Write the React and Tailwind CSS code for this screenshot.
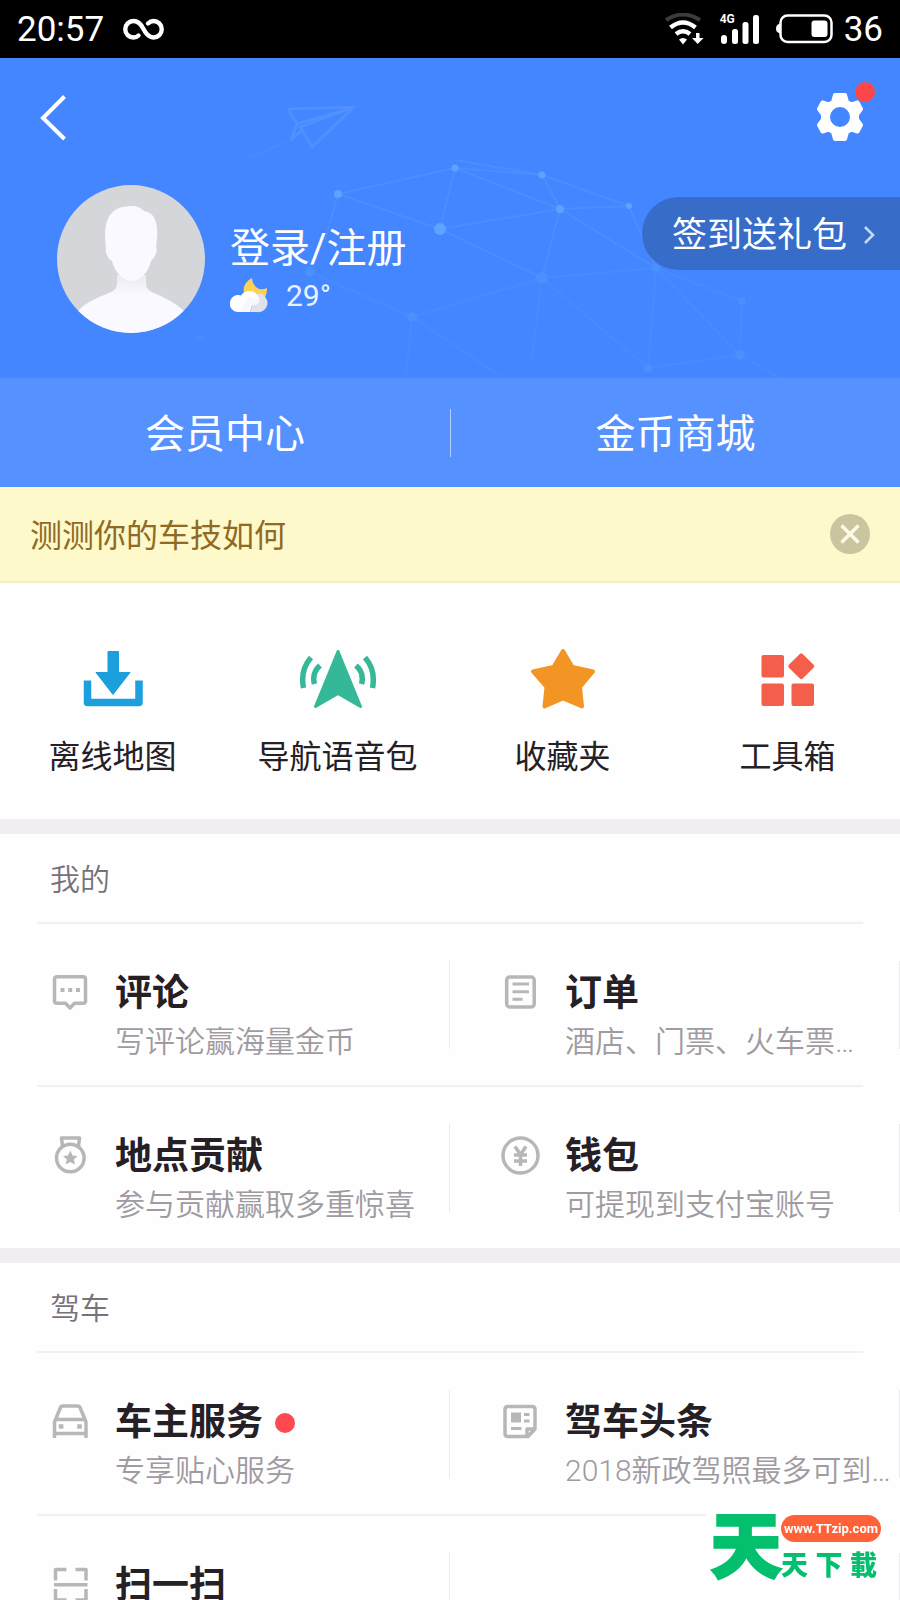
import { useState } from 'react';

const StatusBar = () => (
  <div className="flex items-center justify-between h-[58px] px-[17px] bg-black text-white text-[35px] leading-none">
    <div className="flex items-center gap-4">
      <span>20:57</span>
      <svg className="w-[46px] h-7" viewBox="0 0 46 28" fill="none" stroke="#fff" strokeWidth="4.4" strokeLinecap="round">
        <path d="M18.5 20.5C17 22 15 22.5 13.5 22.5A8.2 8.2 0 0 1 13.5 6C19 6 21.5 10 23.5 14C25.5 18 28.5 22.5 33.5 22.5A8.2 8.2 0 0 0 33.5 6C31.5 6 29.5 7 28 8.5" />
      </svg>
    </div>
    <div className="flex items-center gap-3">
      <svg className="w-10 h-8" viewBox="0 0 40 32" fill="none" stroke="#fff" strokeWidth="4.5">
        <path d="M2 7Q19 -4 36 7" stroke="#3c3c3c" strokeWidth="4" />
        <path d="M6.5 14.5Q19 4.5 31.5 14.5" />
        <path d="M12 21Q19 15.5 26 21" />
        <path d="M15 26.5Q19 23.5 23 26.5L19 31.5Z" fill="#fff" stroke="none" />
        <path d="M32 20h3.500v5h4l-5.800 6l-5.700 -6h4z" fill="#fff" stroke="none" />
      </svg>
      <div className="relative ml-1">
        <span className="absolute left-0 top-0 text-xs leading-none font-bold">4G</span>
        <svg className="w-11 h-8" viewBox="0 0 44 32" fill="#fff">
          <rect x="1" y="22" width="6" height="9" rx="3" />
          <rect x="12" y="16" width="6" height="15" rx="2.5" />
          <rect x="22.5" y="9" width="6" height="22" rx="2.5" />
          <rect x="33" y="2" width="6" height="29" rx="2.5" />
        </svg>
      </div>
      <div className="flex items-center gap-2">
        <svg className="w-[60px] h-8" viewBox="0 0 60 32" fill="none">
          <path d="M5 10.5Q0 11 0 15.500T5 20.500Z" fill="#fff" />
          <rect x="4.5" y="2.5" width="51" height="26.500" rx="7" stroke="#fff" strokeWidth="2.5" />
          <rect x="35.5" y="7.500" width="16" height="16.5" rx="3" fill="#fff" />
        </svg>
        <span>36</span>
      </div>
    </div>
  </div>
);

const Constellation = () => (
  <svg className="absolute left-0 top-0 w-[900px] h-80 pointer-events-none" viewBox="0 58 900 320" fill="none" aria-hidden="true">
    <g stroke="#5a98ff" strokeWidth="2.5" opacity=".6">
      <path d="M288 109L354 107L312 147L300 127L354 107M288 109L297 124L354 107M297 124L291 140L301 131" />
    </g>
    <g stroke="#5797ff" strokeWidth="2" opacity=".45">
      <path d="M338 194L455 168L542 175L560 209L455 168L440 229L338 194L325 240M455 160L542 175L629 206M440 229L560 209L629 206L656 268L560 209L542 278L440 229" />
    </g>
    <g stroke="#5797ff" strokeWidth="2" opacity=".25">
      <path d="M542 278L656 268L742 301L740 355L656 268L648 368L542 278L412 317L310 272M542 278L532 360M412 317L406 376M648 368L740 355L780 378" />
      <path d="M250 157L288 142M412 317L500 376" />
    </g>
    <g fill="#5fa2ff">
      <circle cx="455" cy="168" r="3.5" />
      <circle cx="542" cy="175" r="3.5" />
      <circle cx="560" cy="209" r="4" />
      <circle cx="629" cy="206" r="3" />
      <circle cx="338" cy="194" r="4" />
      <circle cx="440" cy="229" r="6" />
    </g>
    <g fill="#4a90ff">
      <circle cx="542" cy="278" r="6" />
      <circle cx="656" cy="268" r="4" />
      <circle cx="742" cy="301" r="3.5" />
      <circle cx="740" cy="355" r="5" />
      <circle cx="648" cy="368" r="4" />
      <circle cx="412" cy="317" r="5" />
      <circle cx="310" cy="272" r="5" />
      <circle cx="200" cy="338" r="4" opacity=".6" />
    </g>
  </svg>
);

const Avatar = () => (
  <svg className="w-[148px] h-[148px] shrink-0" viewBox="0 0 148 148">
    <defs>
      <clipPath id="avatar-clip">
        <circle cx="74" cy="74" r="74" />
      </clipPath>
      <linearGradient id="neck" x1="0" y1="0" x2="0" y2="1">
        <stop offset="0" stopColor="#eaebee" />
        <stop offset="0.35" stopColor="#f9f9ff" />
      </linearGradient>
    </defs>
    <g clipPath="url(#avatar-clip)">
      <rect width="148" height="148" fill="#d4d6da" />
      <path d="M60 90V99Q60 105 52 108Q30 116 22 125L12 148H136L126 125Q116 116 97 108Q89 105 89 99V90Z" fill="url(#neck)" />
      <path d="M49 64C46 38 50 21 75 21Q82 21 87 26C100 28 102 42 99 62Q101 64 98 71Q96 74 94 76C91 88 83 96 75 96C66 96 58 88 55 76Q52 75 50 70Q48 65 49 64Z" fill="#f9f9ff" />
    </g>
  </svg>
);

const Header = () => (
  <header className="relative bg-[#4486ff] text-white">
    <Constellation />
    <div className="relative flex items-center justify-between h-[118px] pl-9 pr-[33px]">
      <button type="button" aria-label="返回">
        <svg className="w-9 h-12" viewBox="0 0 36 48" fill="none" stroke="#fff" strokeWidth="4">
          <path d="M28.5 3.5L7 25L28.5 46" />
        </svg>
      </button>
      <button type="button" aria-label="设置" className="relative">
        <svg className="w-[54px] h-[54px]" viewBox="-27 -27 54 54">
          <path
            fill="#fff"
            stroke="#fff"
            strokeWidth="4"
            strokeLinejoin="round"
            fillRule="evenodd"
            d="M-5 -22H5L7 -15L11.5 -12.5L17.5 -14.5L21 -8L17 -2.5V2.5L21 8L17.5 14.5L11.5 12.5L7 15L5 22H-5L-7 15L-11.5 12.5L-17.5 14.5L-21 8L-17 2.5V-2.5L-21 -8L-17.5 -14.5L-11.5 -12.5L-7 -15ZM0 -12A12 12 0 1 0 0 12A12 12 0 1 0 0 -12Z"
          />
        </svg>
        <span className="absolute -top-2 -right-2 w-5 h-5 rounded-full bg-[#fc464a]" />
      </button>
    </div>

    <div className="relative flex items-start h-[202px] pt-[9px] pl-[57px]">
      <Avatar />
      <div className="ml-[25px] pt-[34px]">
        <a href="#login" className="block text-[40px] leading-[60px]">登录/注册</a>
        <div className="flex items-center h-8 gap-[18px]">
          <svg className="w-[38px] h-9" viewBox="0 0 38 36">
            <path d="M22 1Q12 6 14 17L22 24L34 22Q37 18 37 11Q30 14 26 10Q22 6 22 1Z" fill="#fcd154" />
            <path d="M20 35H27A9 9 0 0 0 35 20Q32 14 26 18Z" fill="#dfe2ea" />
            <path d="M9 35A8.5 8.5 0 1 1 11 18.5Q14 14 19 14Q27 14 29 22Q23 22 20 35Z" fill="#fff" />
            <path d="M9 35H20Q17 30 24 28Q29 28 30 23L18 20Z" fill="#f6f7fb" />
          </svg>
          <span className="pt-0.5 text-[30px] leading-none text-[#e9f2ff]">29°</span>
        </div>
      </div>
      <button type="button" className="flex items-center gap-[14px] h-[73px] mt-3 ml-auto pt-1 pl-[30px] pr-[23px] rounded-l-full bg-[#376cc9] text-[35px] leading-none">
        签到送礼包
        <svg className="w-4 h-6" viewBox="0 0 16 24" fill="none" stroke="#c8daf8" strokeWidth="2.5">
          <path d="M4 3L12 11L4 19" />
        </svg>
      </button>
    </div>

    <div className="relative grid grid-cols-2 items-center h-[109px] bg-[#5692ff] text-[40px] leading-none">
      <button type="button" className="h-12 pt-1">会员中心</button>
      <button type="button" className="h-12 pt-1 border-l border-[#b4cfff]">金币商城</button>
    </div>
  </header>
);

const Banner = ({ onClose }) => (
  <div className="flex items-center justify-between h-24 px-[30px] bg-[#fdf9cb] border-b-2 border-[#f4eec6]">
    <a href="#quiz" className="pt-1 text-[32px] leading-[48px] text-[#8f6a24]">测测你的车技如何</a>
    <button type="button" aria-label="关闭" onClick={onClose}>
      <svg className="w-10 h-10" viewBox="0 0 40 40">
        <circle cx="20" cy="20" r="20" fill="#c9c69f" />
        <path d="M11.5 11.5L28.5 28.5M28.5 11.5L11.5 28.5" stroke="#fdf9e6" strokeWidth="3.5" />
      </svg>
    </button>
  </div>
);

const shortcuts = [
  {
    label: '离线地图',
    icon: (
      <g fill="#1b9fdd" stroke="#1b9fdd" strokeLinejoin="round">
        <path d="M35 4.5H45.5V25.5H57L40 47.5L23 25.5H35Z" />
        <path d="M14.5 33.5V55.5H66V33.5" fill="none" strokeWidth="7.5" />
      </g>
    ),
  },
  {
    label: '导航语音包',
    icon: (
      <g stroke="#35b898" strokeLinejoin="round">
        <path d="M40 4.5L62.5 59.5L40 46.5L17.5 59.5Z" fill="#35b898" strokeWidth="3" />
        <path d="M13 10.5Q2 23 5.5 41M22 18.5Q13.5 26 16.5 37M67 10.5Q78 23 74.5 41M58 18.5Q66.5 26 63.5 37" fill="none" strokeWidth="5.5" />
      </g>
    ),
  },
  {
    label: '收藏夹',
    icon: (
      <path
        d="M40 4L49.5 20L70 24.5L57 40L59 59.5L40 51.5L21.5 59.5L23.5 40L10 24.5L30.5 20Z"
        fill="#f39524"
        stroke="#f39524"
        strokeWidth="4"
        strokeLinejoin="round"
      />
    ),
  },
  {
    label: '工具箱',
    icon: (
      <g fill="#f45f4b">
        <rect x="13.5" y="8" width="22.5" height="22.5" rx="2" />
        <rect x="13.5" y="36.5" width="22.5" height="22.5" rx="2" />
        <rect x="43.5" y="36.5" width="22.5" height="22.5" rx="2" />
        <rect x="43.5" y="9.5" width="19.5" height="19.5" rx="2" transform="rotate(45 53.25 19.25)" />
      </g>
    ),
  },
];

const Shortcuts = () => (
  <nav className="grid grid-cols-4 pt-16 pb-[37px]">
    {shortcuts.map(({ label, icon }) => (
      <button key={label} type="button" className="flex flex-col items-center gap-[22px] text-[32px] leading-[49px] text-[#252025]">
        <svg className="w-20 h-16" viewBox="0 0 80 64">{icon}</svg>
        {label}
      </button>
    ))}
  </nav>
);

const mine = [
  [
    {
      title: '评论',
      desc: '写评论赢海量金币',
      icon: (
        <>
          <path d="M7 4.7H33Q35.5 4.7 35.5 7V29Q35.5 31.3 33 31.3H24.5L20 36L15.5 31.3H7Q4.5 31.3 4.5 29V7Q4.5 4.7 7 4.7Z" />
          <path d="M10.5 18H14.5M18.2 18H22.2M26 18H30" strokeWidth="4" />
        </>
      ),
    },
    {
      title: '订单',
      desc: '酒店、门票、火车票…',
      icon: (
        <>
          <rect x="6.7" y="5" width="27.5" height="30" rx="3" />
          <path d="M12.5 12H29M12.5 19.7H29M12.5 27.3H22.5" strokeWidth="3" />
        </>
      ),
    },
  ],
  [
    {
      title: '地点贡献',
      desc: '参与贡献赢取多重惊喜',
      icon: (
        <>
          <circle cx="20.3" cy="23" r="13.8" />
          <path d="M12.5 11L11.5 3H29.5L28.5 11" />
          <path d="M20.3 15.5L22.5 20.5L27.5 21L23.8 24.5L25 29.5L20.3 27L15.6 29.5L16.8 24.5L13 21L18 20.5Z" fill="#b9b6ba" stroke="none" />
        </>
      ),
    },
    {
      title: '钱包',
      desc: '可提现到支付宝账号',
      icon: (
        <>
          <circle cx="20.5" cy="20.5" r="17.5" />
          <path d="M15 11.5L20.5 19.5L26 11.5M20.5 19V31M14 20H27M14 26H27" />
        </>
      ),
    },
  ],
];

const driving = [
  [
    {
      title: '车主服务',
      desc: '专享贴心服务',
      isNew: true,
      icon: (
        <>
          <path d="M4.5 37V21L10.5 6.5Q11 5 13 5H27.5Q29.5 5 30 6.5L36 21V37M7 18.5H33.5M4.5 32.5H36" />
          <path d="M8.8 25.5H13.4M27.2 25.5H31.8" strokeWidth="4.5" />
        </>
      ),
    },
    {
      title: '驾车头条',
      desc: '2018新政驾照最多可到…',
      icon: (
        <>
          <path d="M8 5.5H32Q35 5.5 35 8.5V28L28 35.5H8Q5 35.5 5 32.5V8.5Q5 5.5 8 5.5ZM27 35V28H35" />
          <rect x="11" y="11.5" width="10" height="10" fill="#b9b6ba" stroke="none" />
          <path d="M24 13.5H29.5M24 20H29.5M11 27.5H21.5" strokeWidth="3" />
        </>
      ),
    },
  ],
  [
    {
      title: '扫一扫',
      desc: '',
      icon: <path d="M5.5 16.5V5.5H16.5M25.5 5.5H36V16.5M4 20.7H37.5M5.5 25V36H16.5M25.5 36H36V25" />,
    },
    null,
  ],
];

const Entry = ({ item }) => (
  <div className="flex items-center h-full min-w-0">
    {item && (
      <button type="button" className="flex items-start self-start w-full min-w-0 pt-[46px] pl-[50px] text-left">
        <svg className="w-10 h-10 mt-0.5 mr-[25px] shrink-0" viewBox="0 0 40 40" fill="none" stroke="#b9b6ba" strokeWidth="3.5" strokeLinejoin="round">
          {item.icon}
        </svg>
        <span className="flex-1 min-w-0 whitespace-nowrap">
          <span className="flex items-center gap-3 text-[37px] leading-[48px] font-bold text-[#252025]">
            {item.title}
            {item.isNew && <span className="w-5 h-5 rounded-full bg-[#fd4a4f]" />}
          </span>
          <span className="block text-[30px] leading-[48px] font-[350] text-[#a09aa1]">{item.desc}</span>
        </span>
      </button>
    )}
    <span className="w-px h-[88px] ml-auto shrink-0 bg-[#ebeaec]" />
  </div>
);

const Section = ({ title, rows }) => (
  <section className="border-t-[15px] border-[#f2edf3]">
    <h2 className="pl-[50px] h-[88px] text-[30px] leading-[92px] font-[350] text-[#77727a]">{title}</h2>
    {rows.map((row, i) => (
      <div key={i}>
        <div className="mx-[37px] h-0.5 bg-[#f1f0f2]" />
        <div className="grid grid-cols-2 h-[161px]">
          {row.map((item, j) => (
            <Entry key={j} item={item} />
          ))}
        </div>
      </div>
    ))}
  </section>
);

const Watermark = () => (
  <div className="fixed bottom-4 right-[19px] flex items-center pl-1 gap-px bg-[#fefefe] text-[#04bf6d] font-black">
    <span className="w-[70px] text-[72px] leading-[72px] [-webkit-text-stroke:2px_#04bf6d]">天</span>
    <div className="flex flex-col">
      <a href="#ttzip" className="h-[27px] w-[100px] rounded-full bg-[#ff6139] text-center text-[13px] leading-[28px] font-bold text-white">
        www.TTzip.com
      </a>
      <div className="flex justify-between w-24 mt-2 text-[27px] leading-8">
        <span>天</span>
        <span>下</span>
        <span>載</span>
      </div>
    </div>
  </div>
);

const App = () => {
  const [showBanner, setShowBanner] = useState(true);

  return (
    <div lang="zh-CN" className="h-screen overflow-hidden bg-[#fefefe] font-['Roboto','Noto_Sans_CJK_SC',sans-serif]">
      <StatusBar />
      <Header />
      {showBanner && <Banner onClose={() => setShowBanner(false)} />}
      <Shortcuts />
      <Section title="我的" rows={mine} />
      <Section title="驾车" rows={driving} />
      <Watermark />
    </div>
  );
};

export default App;
